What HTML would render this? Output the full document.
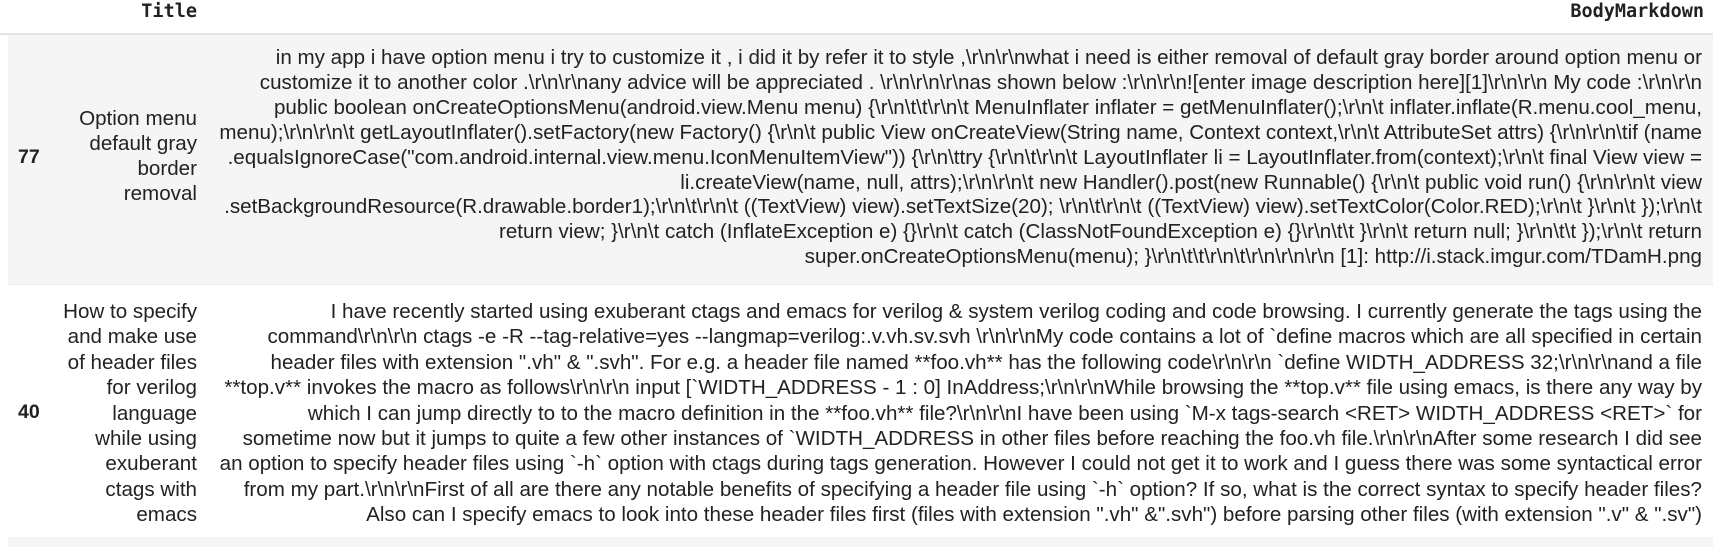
<!DOCTYPE html>
<html><head><meta charset="utf-8"><style>
html,body{margin:0;padding:0;background:#fff;width:1713px;height:547px;overflow:hidden}
.h{position:absolute;top:1px;font:bold 18.5px "DejaVu Sans Mono","Liberation Mono",monospace;color:#222;white-space:nowrap}
.hl{position:absolute;left:0;top:33px;width:1713px;height:2px;background:#e2e2e2}
.r1{position:absolute;left:8px;top:35px;width:1705px;height:249px;background:#f5f5f5;border-bottom:1px dotted #ddd}
.r3{position:absolute;left:8px;top:537px;width:1705px;height:10px;background:#f5f5f5}
.t{position:absolute;font:20.6px/24.9px "Liberation Sans",Arial,sans-serif;color:#222;text-align:right;white-space:nowrap}
.idx{position:absolute;font:bold 19.5px "Liberation Sans",Arial,sans-serif;color:#222}
</style></head><body>
<div class="h" style="right:1516px">Title</div>
<div class="h" style="right:9px">BodyMarkdown</div>
<div class="hl"></div>
<div class="r1"></div>
<div class="r3"></div>

<div class="idx" style="left:18px;top:146px">77</div>
<div class="t" style="right:1516px;top:107px">Option menu<br>default gray<br>border<br>removal</div>
<div class="t" style="right:11px;top:46px">in my app i have option menu i try to customize it , i did it by refer it to style ,\r\n\r\nwhat i need is either removal of default gray border around option menu or<br>customize it to another color .\r\n\r\nany advice will be appreciated . \r\n\r\n\r\nas shown below :\r\n\r\n![enter image description here][1]\r\n\r\n My code :\r\n\r\n<br>public boolean onCreateOptionsMenu(android.view.Menu menu) {\r\n\t\t\r\n\t MenuInflater inflater = getMenuInflater();\r\n\t inflater.inflate(R.menu.cool_menu,<br>menu);\r\n\r\n\t getLayoutInflater().setFactory(new Factory() {\r\n\t public View onCreateView(String name, Context context,\r\n\t AttributeSet attrs) {\r\n\r\n\tif (name<br>.equalsIgnoreCase("com.android.internal.view.menu.IconMenuItemView")) {\r\n\ttry {\r\n\t\r\n\t LayoutInflater li = LayoutInflater.from(context);\r\n\t final View view =<br>li.createView(name, null, attrs);\r\n\r\n\t new Handler().post(new Runnable() {\r\n\t public void run() {\r\n\r\n\t view<br>.setBackgroundResource(R.drawable.border1);\r\n\t\r\n\t ((TextView) view).setTextSize(20); \r\n\t\r\n\t ((TextView) view).setTextColor(Color.RED);\r\n\t }\r\n\t });\r\n\t<br>return view; }\r\n\t catch (InflateException e) {}\r\n\t catch (ClassNotFoundException e) {}\r\n\t\t }\r\n\t return null; }\r\n\t\t });\r\n\t return<br>super.onCreateOptionsMenu(menu); }\r\n\t\t\r\n\t\r\n\r\n\r\n [1]: http://i.stack.imgur.com/TDamH.png</div>

<div class="idx" style="left:18px;top:401px">40</div>
<div class="t" style="right:1516px;top:299px;line-height:25.4px">How to specify<br>and make use<br>of header files<br>for verilog<br>language<br>while using<br>exuberant<br>ctags with<br>emacs</div>
<div class="t" style="right:11px;top:299px;line-height:25.4px">I have recently started using exuberant ctags and emacs for verilog &amp; system verilog coding and code browsing. I currently generate the tags using the<br>command\r\n\r\n ctags -e -R --tag-relative=yes --langmap=verilog:.v.vh.sv.svh \r\n\r\nMy code contains a lot of `define macros which are all specified in certain<br>header files with extension ".vh" &amp; ".svh". For e.g. a header file named **foo.vh** has the following code\r\n\r\n `define WIDTH_ADDRESS 32;\r\n\r\nand a file<br>**top.v** invokes the macro as follows\r\n\r\n input [`WIDTH_ADDRESS - 1 : 0] InAddress;\r\n\r\nWhile browsing the **top.v** file using emacs, is there any way by<br>which I can jump directly to to the macro definition in the **foo.vh** file?\r\n\r\nI have been using `M-x tags-search &lt;RET&gt; WIDTH_ADDRESS &lt;RET&gt;` for<br>sometime now but it jumps to quite a few other instances of `WIDTH_ADDRESS in other files before reaching the foo.vh file.\r\n\r\nAfter some research I did see<br>an option to specify header files using `-h` option with ctags during tags generation. However I could not get it to work and I guess there was some syntactical error<br>from my part.\r\n\r\nFirst of all are there any notable benefits of specifying a header file using `-h` option? If so, what is the correct syntax to specify header files?<br>Also can I specify emacs to look into these header files first (files with extension ".vh" &amp;".svh") before parsing other files (with extension ".v" &amp; ".sv")</div>
</body></html>
